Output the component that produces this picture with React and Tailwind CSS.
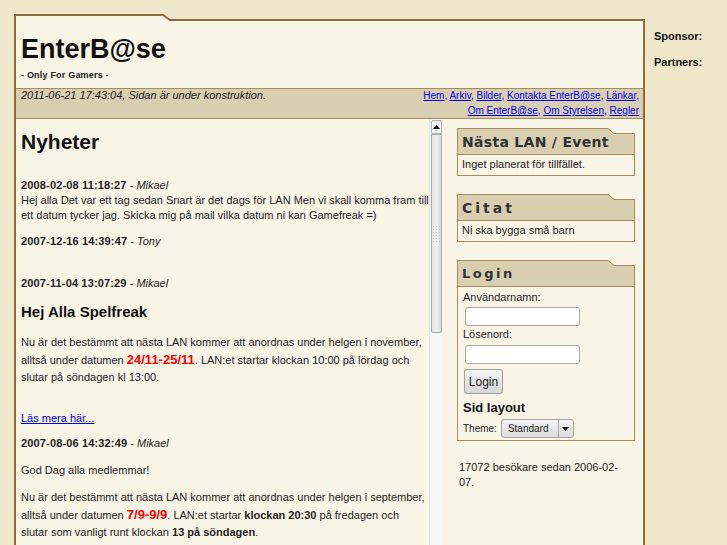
import React from "react";

const panel = "#f8f4e6";
const head = "#d8cfb1";
const brown = "#8c6b3f";
const boxLine = "#a88a5c";

function BoxTop() {
  return (
    <svg width="178" height="6" className="block">
      <polygon points="0,6 0,0 151,0 157,5 178,5 178,6" fill={head} />
      <polyline points="0.5,6 0.5,0.5 151,0.5 157,5.5 177.5,5.5 177.5,6" fill="none" stroke={boxLine} strokeWidth="1" />
    </svg>
  );
}

function Box({ title, titleClass, children }) {
  return (
    <div className="w-[178px]">
      <BoxTop />
      <div className="h-[21px] bg-[#d8cfb1] border-x border-b border-[#a88a5c] pl-[4px] leading-[16px] text-[#333] font-['DejaVu_Sans',sans-serif] font-bold">
        <span className={titleClass}>{title}</span>
      </div>
      <div className="border-x border-b border-[#a88a5c] bg-[#f8f4e6]">{children}</div>
    </div>
  );
}

function Scrollbar() {
  return (
    <div className="w-[14px] shrink-0 flex flex-col bg-[#f3f3f1] border-l border-[#e2e2dc]">
      <div className="h-[14px] mt-px mx-px bg-[#f4f4f4] border border-[#b4b4b4] rounded-t-[2px] flex items-center justify-center">
        <svg width="7" height="4"><polygon points="0,4 3.5,0 7,4" fill="#111" /></svg>
      </div>
      <div className="h-[199px] mx-px bg-gradient-to-r from-[#e4e4e4] via-[#f0f0f0] to-[#dcdcdc] border border-[#a8a8a8] rounded-b-[2px] flex items-center justify-center">
        <div className="grid grid-cols-3 gap-[2px]">
          {Array.from({ length: 18 }).map((_, i) => (
            <div key={i} className="w-[1px] h-[1px] bg-[#c4c4c4]" />
          ))}
        </div>
      </div>
      <div className="flex-1 bg-[#f7f7f5]" />
    </div>
  );
}

export default function App() {
  return (
    <div className="h-screen overflow-hidden bg-[#efe7c9] flex font-['Liberation_Sans',Arial,sans-serif] text-[#1e1e1e]">
      <div className="w-[631px] shrink-0 ml-[14px] mt-[14px] flex flex-col">
        <svg width="631" height="7" className="block">
          <polygon points="0,7 0,0 149,0 156,6 631,6 631,7" fill={panel} />
          <polyline points="1,7 1,1 149,1 156,6 630,6 630,7" fill="none" stroke={brown} strokeWidth="2" />
        </svg>
        <div className="flex-1 border-x-2 border-[#8c6b3f] bg-[#f8f4e6] flex flex-col">
          <div className="h-[67px] pl-[5px] pt-[12px]">
            <div className="text-[27px] leading-[32px] font-bold text-[#111]">EnterB@se</div>
            <div className="mt-[4px] text-[9px] leading-[12px] font-bold tracking-[0.2px] text-[#222]">- Only For Gamers -</div>
          </div>
          <div className="h-[31px] bg-[#d8cfb1] border-y border-[#a88a5c] flex justify-between pl-[5px] pr-[4px]">
            <div className="italic text-[11px] leading-[13px] text-[#222]">2011-06-21 17:43:04, Sidan är under konstruktion.</div>
            <div className="text-[10px] leading-[15px] mt-[-1px] text-right text-[#0000ee]">
              <div>
                <a className="underline">Hem</a>, <a className="underline">Arkiv</a>, <a className="underline">Bilder</a>, <a className="underline">Kontakta EnterB@se</a>, <a className="underline">Länkar</a>,
              </div>
              <div>
                <a className="underline">Om EnterB@se</a>, <a className="underline">Om Styrelsen</a>, <a className="underline">Regler</a>
              </div>
            </div>
          </div>
          <div className="flex-1 flex min-h-0">
            <div className="w-[413px] shrink-0 pl-[5px] overflow-hidden text-[11px] whitespace-nowrap">
              <h1 className="mt-[11px] text-[21px] leading-[24px] font-bold text-[#111]">Nyheter</h1>

              <div className="mt-[24px] leading-[15px]"><b className="tracking-[0.15px]">2008-02-08 11:18:27</b> - <i>Mikael</i></div>
              <div className="leading-[15px]">
                Hej alla Det var ett tag sedan Snart är det dags för LAN Men vi skall komma fram till<br />
                ett datum tycker jag. Skicka mig på mail vilka datum ni kan Gamefreak =)
              </div>

              <div className="mt-[11px] leading-[15px]"><b className="tracking-[0.15px]">2007-12-16 14:39:47</b> - <i>Tony</i></div>

              <div className="mt-[27px] leading-[15px]"><b className="tracking-[0.15px]">2007-11-04 13:07:29</b> - <i>Mikael</i></div>
              <h2 className="mt-[12px] text-[15px] leading-[18px] font-bold text-[#111]">Hej Alla Spelfreak</h2>
              <p className="mt-[13px] leading-[17px]">
                Nu är det bestämmt att nästa LAN kommer att anordnas under helgen i november,<br />
                alltså under datumen <b className="text-[13px] text-[#f00]">24/11-25/11</b>. LAN:et startar klockan 10:00 på lördag och<br />
                slutar på söndagen kl 13:00.
              </p>
              <a className="block mt-[25px] leading-[15px] text-[#0000ee] underline">Läs mera här...</a>

              <div className="mt-[10px] leading-[15px]"><b className="tracking-[0.15px]">2007-08-06 14:32:49</b> - <i>Mikael</i></div>
              <p className="mt-[11px] leading-[17px]">God Dag alla medlemmar!</p>
              <p className="mt-[10px] leading-[17px]">
                Nu är det bestämmt att nästa LAN kommer att anordnas under helgen i september,<br />
                alltså under datumen <b className="text-[13px] text-[#f00]">7/9-9/9</b>. LAN:et startar <b>klockan 20:30</b> på fredagen och<br />
                slutar som vanligt runt klockan <b>13 på söndagen</b>.
              </p>
            </div>
            <Scrollbar />
            <div className="flex-1 pl-[14px] pt-[9px] text-[11px]">
              <Box title="Nästa LAN / Event" titleClass="text-[14px] tracking-[0.3px]">
                <div className="pl-[4px] pt-px pb-[3px] leading-[16px]">Inget planerat för tillfället.</div>
              </Box>
              <div className="mt-[18px]">
                <Box title="Citat" titleClass="text-[14px] tracking-[3px]">
                  <div className="pl-[4px] pt-px pb-[3px] leading-[16px]">Ni ska bygga små barn</div>
                </Box>
              </div>
              <div className="mt-[18px]">
                <Box title="Login" titleClass="text-[13px] tracking-[2.5px]">
                  <div className="pl-[5px] pt-[3px] pb-[2px]">
                    <div className="leading-[14px]">Användarnamn:</div>
                    <div className="mt-[3px] ml-[2px] w-[115px] h-[19px] bg-white border border-[#a9a9a9] rounded-[3px]" />
                    <div className="mt-px leading-[14px]">Lösenord:</div>
                    <div className="mt-[4px] ml-[2px] w-[115px] h-[19px] bg-white border border-[#a9a9a9] rounded-[3px]" />
                    <div className="mt-[5px] ml-[1px] w-[39px] h-[25px] rounded-[3px] border border-[#a0a0a0] bg-gradient-to-b from-[#f4f4f4] to-[#d6d6d6] flex items-center justify-center text-[12px]">Login</div>
                    <div className="mt-[6px] text-[13px] leading-[16px] font-bold text-[#111]">Sid layout</div>
                    <div className="mt-[3px] flex items-center gap-[4px]">
                      <span className="text-[10px]">Theme:</span>
                      <div className="w-[73px] h-[19px] rounded-[3px] border border-[#a8a8a8] bg-gradient-to-b from-[#f4f4f4] to-[#dcdcdc] flex text-[10px]">
                        <span className="flex-1 flex items-center pl-[6px]">Standard</span>
                        <span className="w-[15px] border-l border-[#a8a8a8] flex items-center justify-center">
                          <svg width="7" height="4"><polygon points="0,0 7,0 3.5,4" fill="#111" /></svg>
                        </span>
                      </div>
                    </div>
                  </div>
                </Box>
              </div>
              <div className="mt-[19px] pl-[2px] leading-[15px]">
                17072 besökare sedan 2006-02-<br />07.
              </div>
            </div>
          </div>
        </div>
      </div>
      <div className="flex-1 pl-[9px] pt-[30px] text-[11px] font-bold text-[#111]">
        <div className="leading-[13px]">Sponsor:</div>
        <div className="mt-[13px] leading-[13px]">Partners:</div>
      </div>
    </div>
  );
}
